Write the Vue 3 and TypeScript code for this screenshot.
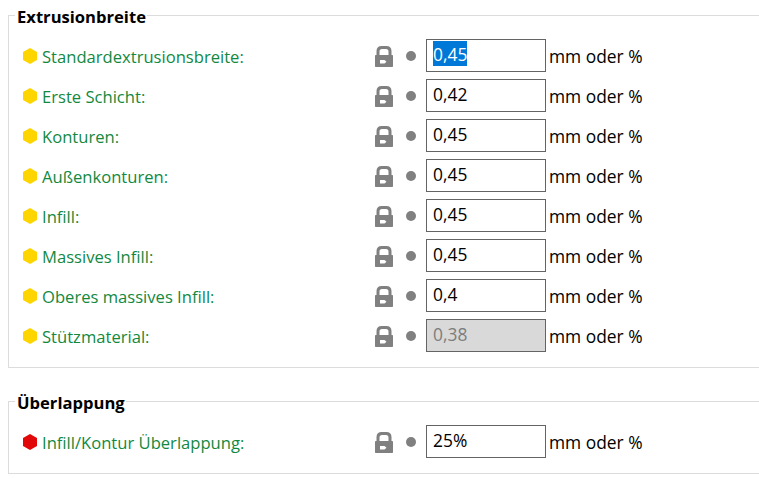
<template>
  <div class="page">
    <fieldset v-for="group in groups" :key="group.title" class="group">
      <legend>{{ group.title }}</legend>
      <div v-for="row in group.rows" :key="row.label" class="row">
        <svg class="hex" viewBox="0 0 14 16" width="14" height="16">
          <polygon points="7,0 14,4 14,12 7,16 0,12 0,4" :fill="row.critical ? '#e00808' : '#ffd500'" />
        </svg>
        <span class="label">{{ row.label }}</span>
        <svg class="lock" viewBox="0 0 18 21" width="18" height="21">
          <path
            fill="#808080"
            fill-rule="evenodd"
            d="M1.500 9V5C1.500 1.800 3.500 0 6.500 0H11.500C14.500 0 16.500 1.800 16.500 5V9H17C17.600 9 18 9.400 18 10V20C18 20.600 17.600 21 17 21H1C0.400 21 0 20.600 0 20V10C0 9.400 0.400 9 1 9ZM4.500 9H13.500V5.500C13.500 3.900 12.600 3 11 3H7C5.400 3 4.500 3.900 4.500 5.500ZM5 14V17.500H9.500L11.500 15.750 9.500 14Z"
          />
        </svg>
        <span class="dot"></span>
        <div class="value" :class="{ disabled: row.disabled }">
          <span class="text" :class="{ selected: row.selected }">{{ row.value }}</span>
        </div>
        <span class="unit">mm oder %</span>
      </div>
    </fieldset>
  </div>
</template>

<script setup lang="ts">
interface Row {
  label: string
  value: string
  selected?: boolean
  disabled?: boolean
  critical?: boolean
}

const groups: { title: string; rows: Row[] }[] = [
  {
    title: 'Extrusionbreite',
    rows: [
      { label: 'Standardextrusionsbreite:', value: '0,45', selected: true },
      { label: 'Erste Schicht:', value: '0,42' },
      { label: 'Konturen:', value: '0,45' },
      { label: 'Außenkonturen:', value: '0,45' },
      { label: 'Infill:', value: '0,45' },
      { label: 'Massives Infill:', value: '0,45' },
      { label: 'Oberes massives Infill:', value: '0,4' },
      { label: 'Stützmaterial:', value: '0,38', disabled: true },
    ],
  },
  {
    title: 'Überlappung',
    rows: [{ label: 'Infill/Kontur Überlappung:', value: '25%', critical: true }],
  },
]
</script>

<style>
html,
body {
  margin: 0;
  background: #fff;
  overflow: hidden;
}
</style>

<style scoped>
.page {
  width: 759px;
  height: 479px;
  overflow: hidden;
  font-family: 'Open Sans', 'Noto Sans', sans-serif;
  font-size: 16.6px;
  color: #000;
}
.group {
  box-sizing: border-box;
  width: 800px;
  margin: 5px 0 0 8px;
  padding: 13px 0 15px 14px;
  border: 1px solid #dcdcdc;
  border-right: none;
}
.group + .group {
  margin-top: 23px;
}
.group legend {
  padding: 2px 1px 0 2px;
  margin-left: -8px;
  font-size: 16.6px;
  font-weight: 700;
  line-height: 19px;
}
.row {
  display: flex;
  align-items: center;
  height: 33px;
  margin-bottom: 7px;
}
.row:last-child {
  margin-bottom: 0;
}
.hex {
  flex: none;
  margin-right: 5px;
}
.label {
  flex: none;
  width: 333px;
  padding-top: 2px;
  color: #12893f;
  white-space: nowrap;
}
.lock {
  flex: none;
  margin-top: 1px;
}
.dot {
  flex: none;
  width: 10px;
  height: 10px;
  margin: 0 10px 0 13px;
  border-radius: 50%;
  background: #808080;
}
.value {
  box-sizing: border-box;
  flex: none;
  width: 120px;
  height: 33px;
  padding: 1px 6px;
  border: 1px solid #646464;
  font-size: 17.4px;
  line-height: 25px;
  background: #fff;
}
.value.disabled {
  background: #d9d9d9;
  color: #7d7d7d;
}
.text {
  display: inline-block;
  padding-top: 2px;
  line-height: 23px;
}
.selected {
  background: #0078d7;
  color: #fff;
}
.unit {
  flex: none;
  margin-left: 3px;
  font-size: 17.4px;
  white-space: nowrap;
}
</style>
